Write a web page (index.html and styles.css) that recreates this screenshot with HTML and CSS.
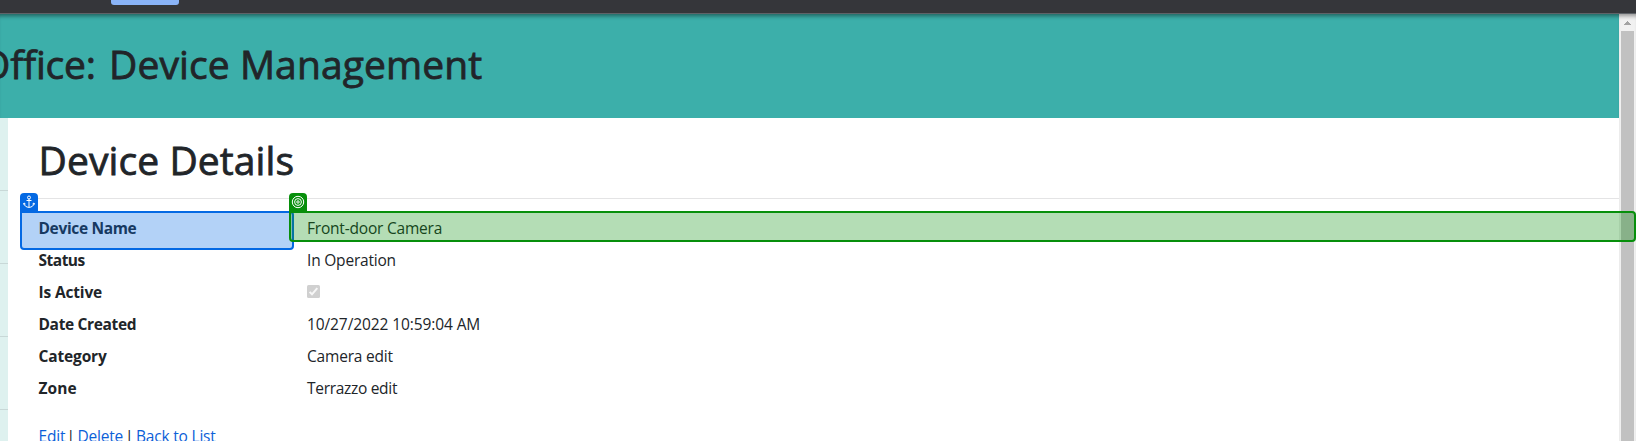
FILE: index.html
```html
<!DOCTYPE html>
<html lang="en">
<head>
<meta charset="utf-8">
<title>Device Details</title>
<link rel="stylesheet" href="styles.css">
</head>
<body>
<div class="toolbar"><div class="tab"></div></div>
<div class="viewport">
  <div class="page">
    <header class="banner"><h1 class="banner-title"><span class="t-office">Office:</span> <span class="t-device">Device Management</span></h1></header>
    <div class="body">
      <aside class="sidebar">
        <div class="side-item"></div><div class="side-item"></div><div class="side-item"></div><div class="side-item"></div>
      </aside>
      <main class="content">
        <h2 class="heading">Device Details</h2>
        <hr class="rule">
        <dl class="details">
          <dt><span class="k-name">Device Name</span></dt><dd><span class="v-name">Front-door Camera</span></dd>
          <dt><span class="k-status">Status</span></dt><dd><span class="v-status">In Operation</span></dd>
          <dt><span class="k-active">Is Active</span></dt>
          <dd><svg class="check" width="13" height="13" viewBox="0 0 13 13"><rect width="13" height="13" rx="1.5" fill="#d0d0d0"/><path d="M2.6 6.9 5 9.3 10.3 3.2" fill="none" stroke="#f7f7f7" stroke-width="2"/></svg></dd>
          <dt><span class="k-date">Date Created</span></dt><dd><span class="v-date">10/27/2022 10:59:04 AM</span></dd>
          <dt><span class="k-cat">Category</span></dt><dd><span class="v-cat">Camera edit</span></dd>
          <dt><span class="k-zone">Zone</span></dt><dd><span class="v-zone">Terrazzo edit</span></dd>
        </dl>
        <nav class="links"><a class="l-edit">Edit</a><span class="bar">|</span><a class="l-delete">Delete</a><span class="bar">|</span><a class="l-back">Back to List</a></nav>
      </main>
    </div>
  </div>
  <div class="scrollbar">
    <svg class="arrow" width="17" height="17" viewBox="0 0 17 17" shape-rendering="crispEdges"><path d="M8 7h1v1h1v1h1v1h1v1H5v-1h1V9h1V8h1z" fill="#a3a3a3"/></svg>
    <div class="thumb"></div>
  </div>
</div>
<div class="mark anchor">
  <div class="badge"><svg width="12" height="14" viewBox="0 0 12 14" fill="none" stroke="#fff"><circle cx="6" cy="2.5" r="1.5"/><path d="M6 4v8.3M3.5 5.5h5M1 8.2c.2 2.6 2.2 4 5 4.2 2.8-.2 4.8-1.6 5-4.2M.3 9.5 1.1 8l1.4 1M11.7 9.5 10.9 8l-1.400 1"/></svg></div>
</div>
<div class="mark target">
  <div class="badge"><svg width="14" height="14" viewBox="0 0 14 14" fill="none" stroke="#fff"><circle cx="7" cy="7" r="5.7"/><circle cx="7" cy="7" r="3.4"/><circle cx="7" cy="7" r="1.2"/></svg></div>
</div>
</body>
</html>
```
FILE: styles.css
```css
* { box-sizing: border-box; }
html, body { margin: 0; height: 441px; overflow: hidden; }
body {
  position: relative;
  display: flex;
  flex-direction: column;
  background: #fff;
  color: #212529;
  font-family: "Open Sans", "Noto Sans", sans-serif;
  font-size: 15.5px;
  line-height: 24px;
  white-space: nowrap;
}
.toolbar { height: 14px; flex: none; background: #35363a; border-bottom: 1px solid #5f6368; padding-left: 111px; }
.tab { width: 68px; height: 5px; background: #8ab4f8; border-radius: 0 0 3px 3px; }
.viewport { display: flex; height: 427px; }
.page { width: 1619px; flex: none; }
.banner {
  height: 104px;
  background: #3cafaa;
  box-shadow: inset 0 5px 4px -3px rgba(0, 0, 0, .45);
  padding-top: 26px;
  overflow: hidden;
}
.banner-title, .heading { font-size: 39px; font-weight: 500; line-height: 48px; letter-spacing: .1px; -webkit-text-stroke: .8px #212529; }
.banner-title { margin: 0 0 0 -20px; display: flex; }
.t-office { width: 129px; letter-spacing: -.2px; }
.body { display: flex; height: 323px; }
.sidebar { width: 8px; flex: none; background: #def1ef; }
.side-item { height: 73px; border-bottom: 1px solid #c8d8d7; }
.content { flex: 1; padding-left: 30.5px; }
.heading { margin: 18px 0 0 0; }
.rule { height: 1px; margin: 14px 0 0 -10px; border: 0; background: #e4e4e5; }
.details { display: grid; grid-template-columns: 268.5px 1fr; grid-auto-rows: 32px; margin: 17px 0 0; }
dt { font-weight: 700; letter-spacing: -.35px; }
.k-status { letter-spacing: -.5px; }
.k-active, .k-cat { letter-spacing: -.15px; }
.k-zone { letter-spacing: .1px; }
dd { margin: 0; letter-spacing: -.2px; }
.v-date { letter-spacing: -.1px; }
.v-zone { letter-spacing: -.3px; }
.check { display: block; margin-top: 5px; }
.links { display: flex; margin-top: 16px; }
.links a { color: #0b60d8; letter-spacing: -.2px; }
.l-edit { width: 28px; }
.bar { width: 11px; }
.l-delete { width: 47.5px; }
.scrollbar { width: 17px; background: #f1f1f1; box-shadow: inset 0 5px 4px -3px rgba(0, 0, 0, .4); }
.arrow { display: block; }
.thumb { width: 13px; height: 410px; margin-left: 2px; background: #c1c1c1; }
.mark { position: absolute; top: 211px; }
.anchor { left: 20px; width: 274px; height: 39px; border: 2px solid #0469e3; border-radius: 0 4px 4px 4px; background: rgba(4, 105, 227, .3); }
.target { left: 289px; width: 1347px; height: 31px; border: 2px solid #078f0b; border-radius: 0 4px 4px 4px; background: rgba(7, 143, 11, .3); }
.badge { position: absolute; left: -2px; top: -20px; width: 18px; height: 20px; border-radius: 4px 4px 0 0; display: flex; justify-content: center; padding-top: 2px; }
.anchor .badge { background: #0469e3; }
.target .badge { background: #078f0b; }
```
